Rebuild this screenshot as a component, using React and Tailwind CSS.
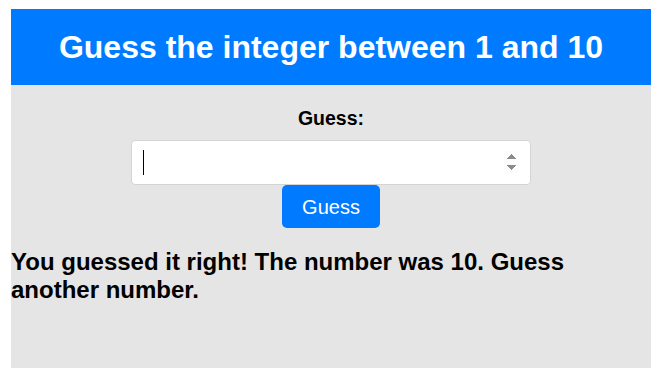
import { useState } from 'react'

export default function App() {
  const [guess, setGuess] = useState('')

  return (
    <div className="min-h-screen bg-white font-['Liberation_Sans',Arial,sans-serif] pt-[9px] pl-[11px]">
      <div className="w-[640px]">
        <header className="h-[76px] bg-[#007bff] flex items-center justify-center">
          <h1 className="text-[32px] font-bold text-white leading-none">Guess the integer between 1 and 10</h1>
        </header>

        <main className="h-[283px] bg-[#e5e5e5] pt-[22px]">
          <form className="flex flex-col items-center" onSubmit={(e) => e.preventDefault()}>
            <label htmlFor="guess" className="text-[19.5px] font-bold text-black leading-[22px]">
              Guess:
            </label>
            <div className="relative mt-[11px]">
              <input
                id="guess"
                type="number"
                autoFocus
                value={guess}
                onChange={(e) => setGuess(e.target.value)}
                className="w-[400px] h-[45px] bg-white border border-[#d4d4d4] rounded-[4px] px-[11px] text-[20px] text-black outline-none caret-transparent"
              />
              {/* text caret as in the screenshot */}
              {guess === '' && (
                <span className="absolute left-[12px] top-[10px] w-px h-[25px] bg-black pointer-events-none" aria-hidden="true" />
              )}
            </div>
            <button
              type="submit"
              className="w-[98px] h-[43px] bg-[#007bff] text-white text-[20px] rounded-[5px]"
            >
              Guess
            </button>
          </form>

          <p className="mt-[20px] text-[24px] font-bold text-black leading-[28px]">
            You guessed it right! The number was 10. Guess another number.
          </p>
        </main>
      </div>
    </div>
  )
}
